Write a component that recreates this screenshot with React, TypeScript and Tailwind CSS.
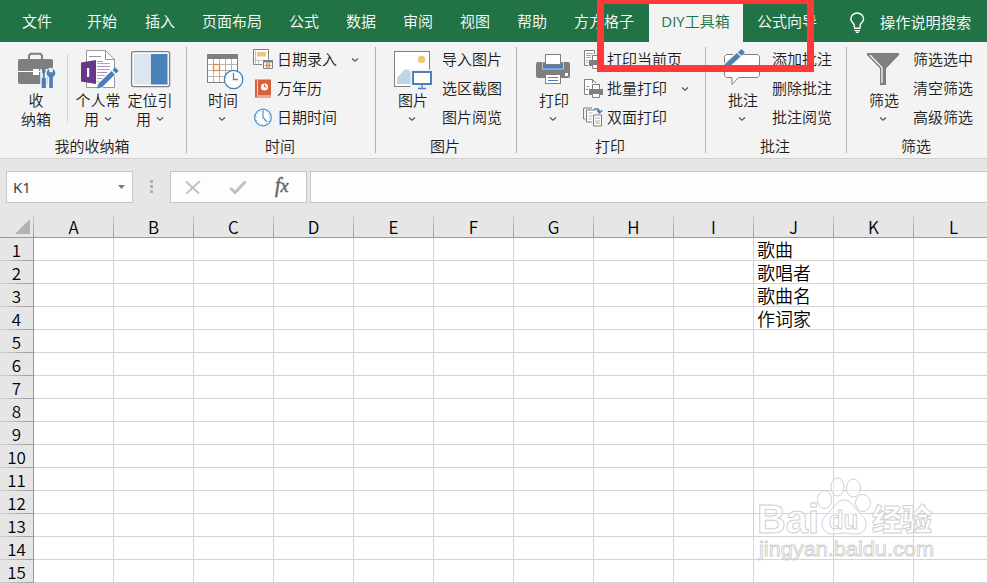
import type { ReactNode } from "react";

const GREY = "#7f7f7f";
const BLUE = "#4b80b9";

const tabs: { label: string; width: string }[] = [
  { label: "文件", width: "w-[65px]" },
  { label: "开始", width: "w-[58px]" },
  { label: "插入", width: "w-[57px]" },
  { label: "页面布局", width: "w-[87px]" },
  { label: "公式", width: "w-[57px]" },
  { label: "数据", width: "w-[57px]" },
  { label: "审阅", width: "w-[57px]" },
  { label: "视图", width: "w-[57px]" },
  { label: "帮助", width: "w-[57px]" },
  { label: "方方格子", width: "w-[75px]" },
];

const columns = ["A", "B", "C", "D", "E", "F", "G", "H", "I", "J", "K", "L"];
const rows = Array.from({ length: 15 }, (_, i) => i + 1);
const cells: Record<string, string> = { J1: "歌曲", J2: "歌唱者", J3: "歌曲名", J4: "作词家" };

function Chevron({ className = "" }: { className?: string }) {
  return (
    <svg className={`shrink-0 ${className}`} width="8" height="6" viewBox="0 0 8 6" fill="none" stroke="#555" strokeWidth="1.2">
      <path d="M1 1.5 4 4.2 7 1.5" />
    </svg>
  );
}

function BigIcon({ x, children }: { x: number; children: ReactNode }) {
  return (
    <svg className="block shrink-0" width="44" height="43" viewBox={`${x} 47 44 43`} fill="none">
      {children}
    </svg>
  );
}

function SmallIcon({ x, y, children }: { x: number; y: number; children: ReactNode }) {
  return (
    <svg className="mr-[2px] block shrink-0" width="22" height="22" viewBox={`${x} ${y} 22 22`} fill="none">
      {children}
    </svg>
  );
}

function BigButton({ icon, lines, arrow, className }: { icon: ReactNode; lines: string[]; arrow: boolean; className: string }) {
  return (
    <div className={`flex shrink-0 flex-col items-center ${className}`}>
      {icon}
      <span className="h-[19px] whitespace-nowrap leading-[19px]">{lines[0]}</span>
      <span className="flex h-[19px] items-center leading-[19px]">
        {lines[1]}
        {arrow && <Chevron className={lines[1] ? "ml-[5px]" : "mr-[2px]"} />}
      </span>
    </div>
  );
}

function Row({ icon, text, arrow, gap = "" }: { icon?: ReactNode; text: string; arrow?: boolean; gap?: string }) {
  return (
    <div className="flex h-[29px] items-center whitespace-nowrap">
      {icon}
      <span>{text}</span>
      {arrow && <Chevron className={gap} />}
    </div>
  );
}

function Group({ label, width, last, children }: { label: string; width: string; last?: boolean; children: ReactNode }) {
  return (
    <div className={`flex h-full shrink-0 ${width}`}>
      <div className="flex min-w-0 flex-1 flex-col">
        <div className="flex h-[94px]">{children}</div>
        <div className="h-[20px] pr-[2px] text-center leading-[20px]">{label}</div>
      </div>
      {!last && <div className="mt-[5px] h-[106px] w-px bg-[#b1b1b1]" />}
    </div>
  );
}

function TabBar() {
  return (
    <div className="flex h-[42px] items-center bg-[#217346] pl-[22px] text-[15px] text-white">
      {tabs.map((t) => (
        <div key={t.label} className={`shrink-0 whitespace-nowrap ${t.width}`}>{t.label}</div>
      ))}
      <div className="flex h-full w-[94px] shrink-0 items-center justify-center whitespace-nowrap bg-[#f3f3f3] pr-[1px] text-[#217346]">
        <span className="font-['Open_Sans'] font-normal">DIY</span>
        <span>工具箱</span>
      </div>
      <div className="ml-[14px] w-[92px] shrink-0 whitespace-nowrap">公式向导</div>
      <svg className="mt-[3px] shrink-0" width="16" height="22" viewBox="849 12 16 22" fill="none" stroke="#fff" strokeWidth="1.4">
        <path d="M854.2 27.5v-2.300c0-2-3.400-3.200-3.400-6.300a6.400 5.900 0 0 1 12.800 0c0 3.100-3.400 4.300-3.400 6.300v2.300M854 28.300h6.500M854.500 30.600h5.500M855.800 32.400h3" />
      </svg>
      <div className="ml-[15px] mt-[1px] whitespace-nowrap text-[15.2px]">操作说明搜索</div>
    </div>
  );
}

function BriefcaseIcon() {
  return (
    <BigIcon x={14}>
      <path d="M29 59v-3.500l1.700-1.700h9.600l1.700 1.700V59" stroke={GREY} strokeWidth="2" />
      <rect x="18" y="59" width="35" height="25" rx="2" fill={GREY} />
      <path d="M18 71.500h35" stroke="#fff" />
      <rect x="33" y="69" width="6" height="6" fill="#fff" />
      <g stroke="#f3f3f3" strokeWidth="3.500" strokeLinejoin="round">
        <path d="M43.700 69v19M51 76v12" strokeWidth="7" />
        <circle cx="51" cy="73" r="3.500" />
      </g>
      <path d="M42 69h3.500v3l-.8 2v4h1.200v10h-4.200V78h1.200v-4l-.9-2z" fill={BLUE} />
      <path d="M49.300 69v4.200h3.400V69c3.500 1.700 3.400 6.400.2 7.900V88h-3.700V76.900c-3.400-1.500-3.300-6.200.1-7.900z" fill={BLUE} />
    </BigIcon>
  );
}

function NotebookIcon() {
  return (
    <BigIcon x={76}>
      <path d="M86.500 50.500h19l9 9v28h-28z" fill="#fff" stroke="#999" />
      <path d="M105.500 50.500v9h9M89 56.500h12" stroke="#999" />
      <path d="M97 61.500h6M97 66.500h13M97 72.500h10M97 78.500h7" stroke="#a98ebb" />
      <path d="M97 63.500h13M97 69.500h13M97 75.500h8M97 81.500h4" stroke="#aaa" />
      <path d="M81 62.500 96 60v24l-15-2.500z" fill="#68378b" />
      <rect x="87" y="68" width="2.200" height="9" fill="#fff" />
      <path d="m98 87 18-17" stroke="#fff" strokeWidth="7" />
      <path d="m97 88.500 1.500-5 13-12.500 3.500 3.600-13 12.600zM112.500 70l2.700-2.700 3.500 3.600-2.700 2.600z" fill={BLUE} />
    </BigIcon>
  );
}

function PanelIcon() {
  return (
    <BigIcon x={128}>
      <rect x="131.600" y="51.600" width="38" height="35" rx="2" fill="#fff" stroke={GREY} strokeWidth="1.300" />
      <path d="M134 54h17v30.500h-17z" fill="#dce6f1" />
      <path d="M151 54h16.500v30.500H151z" fill={BLUE} />
    </BigIcon>
  );
}

function CalendarIcon() {
  return (
    <BigIcon x={201}>
      <path d="M207 54h31v29h-31z" fill="#fff" />
      <path d="M213.500 59v23M219.500 59v23M225.500 59v23M231.500 59v23M207 64.500h31M207 70.500h31M207 76.500h31" stroke="#b4b4b4" />
      <path d="M207.500 58v24.500h30V58" stroke={GREY} />
      <path d="M207 54h31v5h-31z" fill={GREY} />
      <rect x="213.500" y="64.500" width="6" height="6" fill="#fff" stroke="#e8893b" strokeWidth="1.300" />
      <circle cx="233.600" cy="79.500" r="9.200" fill="#fff" stroke={BLUE} strokeWidth="1.300" />
      <path d="M233.500 73v6.500h4.500" stroke={GREY} strokeWidth="1.300" />
    </BigIcon>
  );
}

function PictureIcon() {
  return (
    <BigIcon x={391}>
      <rect x="394.500" y="51.500" width="35" height="35" fill="#fff" stroke={GREY} />
      <circle cx="421.500" cy="59.500" r="3.700" fill="#efc57a" />
      <path d="M397 84v-6l7.500-8.500h4l5 6V84z" fill="#c2d3e8" />
      <path d="M410.500 69.500h23V90h-23z" fill="#f3f3f3" />
      <rect x="413" y="72" width="18" height="12" fill="#fff" stroke={BLUE} strokeWidth="2" />
      <path d="M422 85v3M418 88.500h8" stroke={BLUE} strokeWidth="1.300" />
    </BigIcon>
  );
}

function PrinterIcon() {
  return (
    <BigIcon x={532}>
      <path d="M536 64q0-2 2-2h30q2 0 2 2v12q0 2-2 2h-30q-2 0-2-2z" fill={GREY} />
      <path d="M542.500 62h21v7h-21z" fill={BLUE} stroke="#f3f3f3" strokeWidth=".6" />
      <rect x="545.500" y="54.500" width="15" height="10" fill="#fff" stroke={GREY} />
      <rect x="545.500" y="74.500" width="15" height="9" fill="#fff" stroke={GREY} />
      <path d="M548 77.500h10M548 80.500h10" stroke={BLUE} />
      <path d="M565 73h3v3h-3z" fill="#fff" />
    </BigIcon>
  );
}

function CommentIcon() {
  return (
    <BigIcon x={721}>
      <path d="M726.500 54.500h31l2 2v19l-2 2h-19l-6.500 7v-7h-5.500l-2-2v-19z" fill="#fff" stroke={GREY} />
      <path d="m725 67 18-17" stroke="#f3f3f3" strokeWidth="7" />
      <path d="m723 69 2-5 12-11 3.500 3.500L728 68zM738 52.300l3.400-3.300 3.500 3.500-3.400 3.300z" fill={BLUE} />
    </BigIcon>
  );
}

function FunnelIcon() {
  return (
    <BigIcon x={862}>
      <path d="M867 53h32v2l-13 13.500V85h-6V68.500L867 55z" fill={GREY} />
      <path d="m870 55 12 12.500V83" stroke="#f3f3f3" strokeWidth="1.300" />
    </BigIcon>
  );
}

function DateEntryIcon() {
  return (
    <SmallIcon x={253} y={48.5}>
      <path d="M253.500 49h15v15h-15z" fill="#fff" stroke={GREY} />
      <path d="M254 60h14M258.500 59v5M263.500 59v5M255.500 50v14" stroke="#c4c4c4" />
      <path d="M257 51.500h9v4.500h-9z" fill="#efc57a" />
      <path d="M262 59h12v11h-12z" fill="#f3f3f3" />
      <path d="M263.500 60h9v8h-9z" fill="#fff" stroke={GREY} />
      <path d="M263 61h10" stroke={GREY} strokeWidth="2" />
      <path d="M266.500 62v6M269.500 62v6M264 65h8" stroke="#bbb" />
      <path d="M266.500 63.500h3v3h-3z" stroke="#e0762c" />
    </SmallIcon>
  );
}

function AlmanacIcon() {
  return (
    <SmallIcon x={253} y={77.5}>
      <path d="M255 79h16v16h-14v1h14v1h-16z" fill="#d9603f" />
      <path d="M257.500 79v16" stroke="#f3f3f3" strokeWidth=".8" />
      <circle cx="264.500" cy="86.500" r="3.600" fill="#fff" />
      <path d="M264.500 84v2.500h2" stroke="#d9603f" />
    </SmallIcon>
  );
}

function ClockIcon() {
  return (
    <SmallIcon x={253} y={106.5}>
      <circle cx="263" cy="117" r="8.300" fill="#fff" stroke="#4c94cf" strokeWidth="1.200" />
      <path d="M263 110v7l4 4.500" stroke="#4c94cf" strokeWidth="1.200" />
      <circle cx="263" cy="117" r="6.800" stroke="#4c94cf" strokeWidth="1" strokeDasharray=".8 2.760" />
    </SmallIcon>
  );
}

function MiniPrinter({ x, y }: { x: number; y: number }) {
  return (
    <g transform={`translate(${x} ${y})`}>
      <path d="M2-1h10v5h3v8h-3v3H3v-3H-1V4h3z" fill="#f3f3f3" />
      <path d="M0 5h14v6H0z" fill={GREY} />
      <path d="M3.500.500h7v5h-7zM3.500 9.500h7v4h-7z" fill="#fff" stroke={GREY} />
    </g>
  );
}

function PrintPageIcon() {
  return (
    <SmallIcon x={583} y={49}>
      <path d="M584.500 50.500h10v15h-10z" fill="#fff" stroke={GREY} />
      <path d="M586 53.500h7M586 55.500h7M586 57.500h6M586 60.500h4M586 62.500h4" stroke="#aaa" />
      <MiniPrinter x={589} y={55} />
    </SmallIcon>
  );
}

function BatchPrintIcon() {
  return (
    <SmallIcon x={583} y={78}>
      <path d="M584.500 79.500h8l4 4v11h-12z" fill="#fff" stroke={GREY} />
      <path d="M592.500 79.500v4h4" stroke={GREY} />
      <path d="M587 86.500h2M586 89.500h2M588 92.500h2" stroke={GREY} />
      <MiniPrinter x={589} y={84} />
    </SmallIcon>
  );
}

function DuplexIcon() {
  return (
    <SmallIcon x={583} y={106.5}>
      <path d="M592 107.500h-8.500v11h2" stroke={GREY} />
      <path d="M595 109.500h-8.500v12H592" fill="#fff" stroke={GREY} />
      <path d="M588.500 112.500h4M588.500 115.500h4M588.500 118.500h3" stroke="#aaa" />
      <path d="M593.500 114.500h8v11h-8z" fill="#fff" stroke={GREY} />
      <path d="M595 117.500h5M595 120.500h5M595 122.500h5" stroke="#aaa" />
      <path d="M594 109.300c2.500-2 5.500-1.200 5.600 2.500M597 109.800l2.600 2.600 2.600-2.600" stroke={BLUE} strokeWidth="1.500" />
    </SmallIcon>
  );
}

function Ribbon() {
  return (
    <div className="flex h-[117px] border-b border-[#d0d0d0] bg-[#f3f3f3] text-[15px] text-[#1c1c1c]">
      <Group label="我的收纳箱" width="w-[187px]">
        <BigButton className="ml-[14px] mt-[5px] w-[44px]" icon={<BriefcaseIcon />} lines={["收", "纳箱"]} arrow={false} />
        <div className="ml-[9px] mt-[12px] h-[69px] w-px bg-[#d4d4d4]" />
        <BigButton className="ml-[8px] mt-[5px] w-[44px]" icon={<NotebookIcon />} lines={["个人常", "用"]} arrow />
        <BigButton className="ml-[8px] mt-[5px] w-[44px]" icon={<PanelIcon />} lines={["定位引", "用"]} arrow />
      </Group>
      <Group label="时间" width="w-[189px]">
        <BigButton className="ml-[14px] mt-[5px] w-[44px]" icon={<CalendarIcon />} lines={["时间", ""]} arrow />
        <div className="ml-[8px] mt-[3px]">
          <Row icon={<DateEntryIcon />} text="日期录入" arrow gap="ml-[14px]" />
          <Row icon={<AlmanacIcon />} text="万年历" />
          <Row icon={<ClockIcon />} text="日期时间" />
        </div>
      </Group>
      <Group label="图片" width="w-[141px]">
        <BigButton className="ml-[15px] mt-[5px] w-[44px]" icon={<PictureIcon />} lines={["图片", ""]} arrow />
        <div className="ml-[7px] mt-[3px]">
          <Row text="导入图片" />
          <Row text="选区截图" />
          <Row text="图片阅览" />
        </div>
      </Group>
      <Group label="打印" width="w-[189px]">
        <BigButton className="ml-[15px] mt-[5px] w-[44px]" icon={<PrinterIcon />} lines={["打印", ""]} arrow />
        <div className="ml-[7px] mt-[3px]">
          <Row icon={<PrintPageIcon />} text="打印当前页" />
          <Row icon={<BatchPrintIcon />} text="批量打印" arrow gap="ml-[14px]" />
          <Row icon={<DuplexIcon />} text="双面打印" />
        </div>
      </Group>
      <Group label="批注" width="w-[141px]">
        <BigButton className="ml-[15px] mt-[5px] w-[44px]" icon={<CommentIcon />} lines={["批注", ""]} arrow />
        <div className="ml-[7px] mt-[3px]">
          <Row text="添加批注" />
          <Row text="删除批注" />
          <Row text="批注阅览" />
        </div>
      </Group>
      <Group label="筛选" width="w-[140px]" last>
        <BigButton className="ml-[15px] mt-[5px] w-[44px]" icon={<FunnelIcon />} lines={["筛选", ""]} arrow />
        <div className="ml-[7px] mt-[3px]">
          <Row text="筛选选中" />
          <Row text="清空筛选" />
          <Row text="高级筛选" />
        </div>
      </Group>
    </div>
  );
}

function FormulaBar() {
  return (
    <div className="flex h-[56px] pl-[6px] pt-[12px]">
      <div className="flex h-[32px] w-[127px] shrink-0 items-center justify-between border border-[#c6c6c6] bg-[#fdfdfd] pl-[6px] pr-[7px] font-['Open_Sans'] text-[15px] font-normal text-[#333]">
        <span>K1</span>
        <svg width="7" height="4" viewBox="0 0 7 4"><path d="M0 0h7L3.500 4z" fill="#777" /></svg>
      </div>
      <div className="ml-[17px] mt-[9px] flex w-[3px] shrink-0 flex-col gap-[2px]">
        <i className="h-[3px] bg-[#b0b0b0]" />
        <i className="h-[3px] bg-[#b0b0b0]" />
        <i className="h-[3px] bg-[#b0b0b0]" />
      </div>
      <div className="ml-[17px] flex h-[32px] w-[137px] shrink-0 items-center border border-[#c6c6c6] bg-[#fdfdfd]">
        <svg className="ml-[14px]" width="16" height="15" viewBox="0 0 16 15" fill="none" stroke="#c2c2c2" strokeWidth="2">
          <path d="M1 1.500 14 13.500M15 1 1.500 13.500" />
        </svg>
        <svg className="ml-[28px]" width="18" height="15" viewBox="0 0 18 15" fill="none" stroke="#c2c2c2" strokeWidth="3">
          <path d="m1.500 8 4.500 4.500L16.500 1.500" />
        </svg>
        <span className="ml-[28px] pb-[3px] font-['Liberation_Serif'] text-[20px] italic leading-[24px] text-[#666] [-webkit-text-stroke:0.5px_#666]">
          f<span className="text-[18px]">x</span>
        </span>
      </div>
      <div className="ml-[3px] h-[32px] flex-1 border border-r-0 border-[#c6c6c6] bg-[#fdfdfd]" />
    </div>
  );
}

function Sheet() {
  return (
    <div className="w-[994px] text-black">
      <div className="flex h-[23px] border-b border-[#999]">
        <div className="flex h-[22px] w-[34px] shrink-0">
          <svg width="33" height="22" viewBox="0 0 33 22"><path d="M30 4v15H15z" fill="#b2b2b2" /></svg>
          <div className="w-px bg-linear-to-b from-[#cfcfcf] to-[#999]" />
        </div>
        {columns.map((c) => (
          <div key={c} className="flex h-[22px] w-[80px] shrink-0">
            <div className="w-[79px] pt-[1px] text-center text-[17px] leading-[22px]">{c}</div>
            <div className="w-px bg-linear-to-b from-[#cfcfcf] to-[#999]" />
          </div>
        ))}
      </div>
      {rows.map((r) => (
        <div key={r} className="flex h-[23px]">
          <div className="flex w-[34px] shrink-0 flex-col border-r border-[#999]">
            <div className="h-[22px] pt-[1px] text-center text-[17px] leading-[21px]">{r}</div>
            <div className="h-px bg-linear-to-r from-[#d0d0d0] to-[#999]" />
          </div>
          {columns.map((c) => (
            <div key={c} className="w-[80px] shrink-0 whitespace-nowrap border-b border-r border-[#d4d4d4] bg-white pl-[3px] pt-[1px] text-[18px] leading-[21px]">
              {cells[`${c}${r}`]}
            </div>
          ))}
        </div>
      ))}
    </div>
  );
}

function Watermark() {
  return (
    <svg className="absolute left-[750px] top-[470px]" width="200" height="100" viewBox="750 470 200 100" fill="#fff" fillOpacity=".5" stroke="#c4c4c4" strokeOpacity=".8" strokeWidth="1">
      <text x="757" y="533" fontFamily="Liberation Sans" fontWeight="700" fontSize="41" textLength="62" lengthAdjust="spacingAndGlyphs">Bai</text>
      <ellipse cx="824.500" cy="499.500" rx="7" ry="9" />
      <ellipse cx="837.500" cy="487" rx="6.500" ry="9" />
      <ellipse cx="853.500" cy="488" rx="7" ry="9" />
      <ellipse cx="863" cy="503" rx="7.500" ry="8.500" />
      <path d="M844 500c6 0 9 5 12 9s10 8 10 15-4 10-10 10-8-1-12-1-7 1-12 1-10-4-10-10 5-10 10-15 6-9 12-9z" />
      <text x="829" y="529" fontFamily="Liberation Sans" fontWeight="700" fontSize="25" textLength="29" lengthAdjust="spacingAndGlyphs">du</text>
      <text x="872" y="530" fontFamily="Noto Sans CJK SC" fontWeight="900" fontSize="30">经验</text>
      <text x="759" y="556" fontFamily="Liberation Sans" fontSize="21" fontWeight="400" textLength="175" lengthAdjust="spacingAndGlyphs">jingyan.baidu.com</text>
    </svg>
  );
}

export default function App() {
  return (
    <div className="relative h-[583px] w-[987px] overflow-hidden bg-[#e6e6e6] font-['Noto_Sans_CJK_SC',sans-serif] font-[350]">
      <TabBar />
      <Ribbon />
      <FormulaBar />
      <Sheet />
      <Watermark />
      <div className="absolute left-[597px] top-0 h-[72px] w-[217px] border-[7px] border-t-[4px] border-[#ff3838]" />
    </div>
  );
}
